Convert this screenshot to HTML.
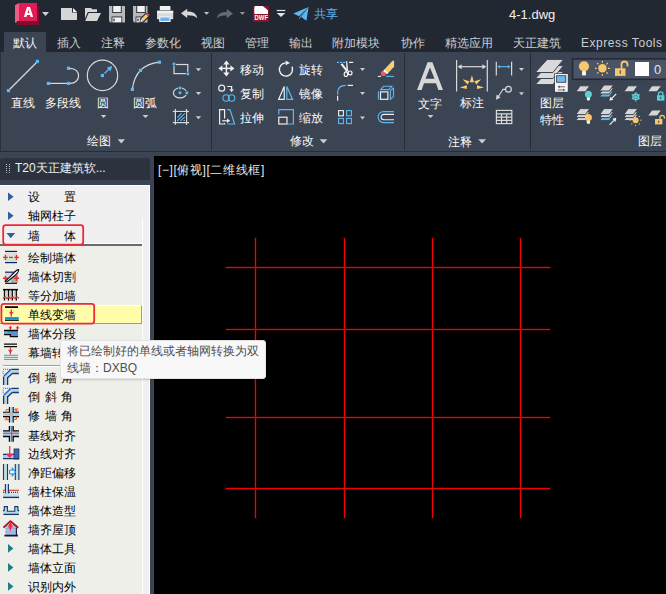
<!DOCTYPE html>
<html><head><meta charset="utf-8">
<style>
*{margin:0;padding:0;box-sizing:border-box}
html,body{width:666px;height:594px;overflow:hidden;background:#222831;font-family:"Liberation Sans",sans-serif;}
.a{position:absolute}
.t{position:absolute;white-space:nowrap;font-size:12px;line-height:12px;color:#fafafa;font-weight:500}
svg{position:absolute;overflow:visible}
#title{left:0;top:0;width:666px;height:32px;background:#222831}
#tabs{left:0;top:32px;width:666px;height:20px;background:#222831}
#rib{left:0;top:52px;width:666px;height:99px;background:#3b4453;border-left:1px solid #2a303a}
.sep{position:absolute;top:53px;width:1px;height:97px;background:#262c36}
.tab{color:#c9cdd3}
.arr{position:absolute;width:0;height:0;border-left:3.5px solid transparent;border-right:3.5px solid transparent;border-top:4px solid #d0d3d8}
#band{left:0;top:151px;width:666px;height:5px;background:#3b4453;border-top:1px solid #272d37}
#dwg{left:154px;top:156px;width:512px;height:438px;background:#000}
#pal{left:0;top:156px;width:154px;height:438px;background:#3b4453}
#paltitle{left:0;top:158px;width:150px;height:22px;background:#2c323e;border-radius:3px 3px 0 0}
#list{left:0;top:185px;width:150px;height:409px;background:#f0f0f0;border-top:1px solid #fff;border-right:1px solid #fff}
.li{position:absolute;left:28px;font-size:12px;line-height:12px;color:#000;white-space:nowrap;font-weight:500}
.gl{position:absolute;background:#f40000;box-shadow:0 0 0 1px rgba(120,0,0,0.35)}
</style></head><body>
<div class="a" id="title"></div>
<div class="a" id="tabs"></div>
<div class="a" style="left:4px;top:32px;width:42px;height:20px;background:#3b4453"></div>
<div class="a" id="rib"></div>
<div class="sep" style="left:211px"></div>
<div class="sep" style="left:404px"></div>
<div class="sep" style="left:530px"></div>
<div class="a" id="band"></div>
<div class="a" id="pal"></div>
<div class="a" id="dwg"></div>
<div class="a" id="paltitle"></div>
<div class="a" id="list"></div>
<div class="a" style="left:142px;top:219px;width:1px;height:375px;background:#fff"></div>
<div class="a" style="left:0;top:246px;width:142px;height:348px;background:#efefea"></div>
<div class="a" style="left:0;top:305px;width:142px;height:19px;background:#fffdaa;border-top:1px solid #fff;border-right:1px solid #9a9a9a;border-bottom:1px solid #9a9a9a"></div>
<div class="a" style="left:0;top:243px;width:142px;height:1px;background:#fafafa"></div><div class="a" style="left:0;top:244px;width:142px;height:2px;background:#6b6b6b"></div>
<div class="a" style="left:3px;top:365px;width:139px;height:1px;background:#a0a0a0"></div><div class="a" style="left:3px;top:366px;width:139px;height:1px;background:#fff"></div>


<svg width="666" height="594" style="left:0;top:0" viewBox="0 0 666 594">
<!-- ===== title bar ===== -->
<polygon points="15,5.3 19,3 19,21 15,23" fill="#ee5c86"/>
<polygon points="17,21 37,21 37,7 39,7 39,25 17,25" fill="#850a2c"/>
<rect x="19" y="3" width="18" height="18" fill="#e31b54"/>
<path d="M23.8,17 L27,7.1 H30 L33.2,17 H30.6 L30,15 H27 L26.4,17 Z M27.6,12.9 H29.4 L28.5,9.6 Z" fill="#fff" fill-rule="evenodd"/>
<polygon points="42,12 49,12 45.5,16" fill="#cfd2d6"/>
<!-- new -->
<path d="M61,8 H72 V12.6 H77 V20 H61 Z" fill="#d6d6d6"/>
<polygon points="73,8 77,12 73,12" fill="#f4f4f4"/>
<!-- open -->
<path d="M85,8 H91 L92.3,9.3 H97 V12 H87.8 L85,18.5 Z" fill="#d6d6d6"/>
<polygon points="88.6,13 101,13 97,21 85.2,21" fill="#d6d6d6"/>
<!-- save -->
<path d="M109,6 H125 V22.4 H110.5 L109,20.9 Z" fill="#b9b9b9"/>
<rect x="112.3" y="5" width="9.4" height="8" fill="#222831"/>
<rect x="113.2" y="6" width="7.6" height="6.1" fill="#f2f2f2"/>
<rect x="111.6" y="16.5" width="10.6" height="6.5" fill="#222831"/>
<rect x="112.4" y="17.4" width="9" height="5" fill="#f2f2f2"/>
<rect x="113.4" y="18.6" width="1.2" height="2.6" fill="#222831"/>
<!-- save as -->
<path d="M133,6 H147.5 V22.4 H134.5 L133,20.9 Z" fill="#b9b9b9"/>
<rect x="136.3" y="5" width="9.4" height="8" fill="#222831"/>
<rect x="137.2" y="6" width="7.6" height="6.1" fill="#f2f2f2"/>
<rect x="135.6" y="16.5" width="8" height="6.5" fill="#222831"/>
<rect x="136.4" y="17.4" width="6.5" height="5" fill="#f2f2f2"/>
<rect x="137.4" y="18.6" width="1.2" height="2.6" fill="#222831"/>
<polygon points="140,18.5 146,12.5 149.8,16.2 143.8,22.2 139.5,23.5" fill="#222831"/>
<polygon points="141,19 146,14 148.3,16.3 143.3,21.3" fill="#f5c86a"/>
<polygon points="146,14 147.3,12.7 149.6,15 148.3,16.3" fill="#e8475a"/>
<polygon points="141,19 143.3,21.3 140.2,22.2" fill="#eee"/>
<!-- print -->
<rect x="159.8" y="6" width="10.6" height="4.3" fill="#f2f2f2"/>
<rect x="157" y="10.8" width="16.2" height="8.4" fill="#d9d9d9"/>
<rect x="157" y="10.8" width="16.2" height="2.5" fill="#f0f0f0"/>
<rect x="159.2" y="16.4" width="11.4" height="5.6" fill="#f2f2f2"/>
<rect x="160.3" y="17.5" width="9.2" height="3.5" fill="#6bb4ef"/>
<!-- undo -->
<path d="M181,13.3 L187.2,8.8 V11.6 C192,11.6 196.5,13 197.2,18.2 C195,15.8 191.5,15.2 187.2,15.2 V18 Z" fill="#d6d6d6"/>
<polygon points="204,12 209.2,12 206.6,14.8" fill="#c0c4ca"/>
<!-- redo -->
<path d="M233,13.5 L226.8,9.1 V11.9 C222,11.9 217.5,13.3 216.8,18.2 C219,16 222.5,15.5 226.8,15.5 V18.2 Z" fill="#666b73"/>
<polygon points="239.8,12 245,12 242.4,15" fill="#8d9198"/>
<!-- dwf -->
<rect x="253" y="6.1" width="15.8" height="15.8" fill="#8b1429"/>
<path d="M254.8,6.1 H263 L268,10.2 V14 H254.8 Z" fill="#fff"/>
<polygon points="263,6.1 268.8,6.1 268.8,10.6" fill="#8b1429"/>
<rect x="254" y="7" width="0.9" height="7" fill="#f6b7c4"/>
<text x="254.6" y="19.7" font-family="Liberation Sans" font-weight="bold" font-size="6.4" fill="#fff" textLength="13.4" lengthAdjust="spacingAndGlyphs">DWF</text>
<!-- customize -->
<rect x="276.7" y="9.9" width="8.6" height="1.2" fill="#e4e4e4"/>
<polygon points="276.7,13 285.3,13 281,17.1" fill="#e4e4e4"/>
<!-- share plane -->
<polygon points="293.3,13.4 308.6,6.9 299,16.2" fill="#5db6ef"/>
<polygon points="308.6,6.9 306.4,20.8 301.2,17" fill="#5db6ef"/>
<polygon points="308.6,6.9 299.8,16.8 298.6,19.8" fill="#5db6ef"/>
</svg>


<svg width="666" height="594" style="left:0;top:0" viewBox="0 0 666 594">
<g fill="none" stroke="#d9d9d9" stroke-width="1.2">
<line x1="9.5" y1="89.5" x2="36.5" y2="62.5"/>
<line x1="50" y1="83.4" x2="67" y2="83.4"/>
<path d="M70,68.3 C81.5,68.3 81.5,83.4 70,83.4"/>
<circle cx="102.5" cy="75.4" r="15.2"/>
<path d="M132.4,89.4 Q135.1,65 159.4,62.2"/>
<rect x="174" y="64.5" width="13.8" height="9.1"/>
<ellipse cx="180" cy="92.9" rx="6.6" ry="5"/>
<line x1="175.4" y1="109" x2="175.4" y2="124.8"/>
<line x1="186.5" y1="109" x2="186.5" y2="124.8"/>
<line x1="172.8" y1="111.5" x2="189" y2="111.5"/>
<line x1="172.8" y1="122.6" x2="189" y2="122.6"/>
</g>
<g fill="none" stroke="#5cb8f5" stroke-width="1.2">
<line x1="104.5" y1="73.5" x2="109.5" y2="68.5"/>
<rect x="176" y="112.1" width="9.9" height="9.9" fill="#2b3140" stroke="none"/><path d="M177.2,121 L184.8,113.4 M177.2,117.6 L181.6,113.2 M180.4,121.2 L184.8,116.8 M183.6,121.2 L184.8,120" stroke-width="1.1" stroke="#66c0f6"/>
</g>
<polygon points="112.2,66 106.8,67.6 110.6,71.4" fill="#5cb8f5"/>

<rect x="6.90" y="89.00" width="3.2" height="3.2" fill="#5cb8f5"/><rect x="35.80" y="59.80" width="3.2" height="3.2" fill="#5cb8f5"/>
<rect x="46.80" y="81.80" width="3.2" height="3.2" fill="#5cb8f5"/><rect x="66.90" y="81.80" width="3.2" height="3.2" fill="#5cb8f5"/><rect x="66.90" y="66.70" width="3.2" height="3.2" fill="#5cb8f5"/>
<rect x="100.80" y="73.90" width="3.2" height="3.2" fill="#5cb8f5"/>
<rect x="130.80" y="87.80" width="3.2" height="3.2" fill="#5cb8f5"/><rect x="138.90" y="68.80" width="3.2" height="3.2" fill="#5cb8f5"/><rect x="157.80" y="60.60" width="3.2" height="3.2" fill="#5cb8f5"/>
<rect x="172.00" y="62.00" width="4" height="4" fill="#3b4453"/><rect x="172.65" y="62.65" width="2.7" height="2.7" fill="#5cb8f5"/><rect x="185.90" y="71.90" width="4" height="4" fill="#3b4453"/><rect x="186.55" y="72.55" width="2.7" height="2.7" fill="#5cb8f5"/>
<rect x="178.00" y="86.00" width="4" height="4" fill="#3b4453"/><rect x="178.65" y="86.65" width="2.7" height="2.7" fill="#5cb8f5"/><rect x="178.00" y="90.80" width="4" height="4" fill="#3b4453"/><rect x="178.65" y="91.45" width="2.7" height="2.7" fill="#5cb8f5"/><rect x="184.90" y="90.80" width="4" height="4" fill="#3b4453"/><rect x="185.55" y="91.45" width="2.7" height="2.7" fill="#5cb8f5"/>
<polygon points="195.7,68.2 201.2,68.2 198.45,71.2" fill="#c9ccd1"/><polygon points="195.7,92 201.2,92 198.45,95" fill="#c9ccd1"/><polygon points="195.7,116.2 201.2,116.2 198.45,119.2" fill="#c9ccd1"/>
<polygon points="100.8,115 106.4,115 103.6,118" fill="#c9ccd1"/>
<polygon points="142.5,115 148.5,115 145.5,118" fill="#c9ccd1"/>
<polygon points="117.6,139.3 125,139.3 121.3,143.4" fill="#c9ccd1"/>

<!-- modify -->
<g fill="none" stroke="#f0f0f0" stroke-width="1.5">
<line x1="221" y1="68.4" x2="232" y2="68.4" stroke-width="1.5"/>
<line x1="226.4" y1="63" x2="226.4" y2="74" stroke-width="1.5"/>
<path d="M291.9,66.6 A6.6,6.6 0 1 1 285.6,62.9" stroke-width="1.4"/>
</g>
<polygon points="218.4,68.4 222.4,65.2 222.4,71.6" fill="#f0f0f0"/>
<polygon points="234.4,68.4 230.4,65.2 230.4,71.6" fill="#f0f0f0"/>
<polygon points="226.4,60.4 223.2,64.4 229.6,64.4" fill="#f0f0f0"/>
<polygon points="226.4,76.4 223.2,72.4 229.6,72.4" fill="#f0f0f0"/>
<polygon points="290,62.9 285.6,60.5 285.6,65.3" fill="#f0f0f0"/>
<g fill="none" stroke="#eeeeee" stroke-width="1.2">
<circle cx="221.7" cy="88.2" r="3"/>
<path d="M227.2,86.5 H231.6 V89.5"/>
<polygon points="278.6,99.4 284.2,86.6 284.2,99.4"/>
<path d="M224.6,118.6 V109.6 H219.6 V124 H224.6 V123"/>
<line x1="222.2" y1="120.8" x2="227.5" y2="120.8"/>
<rect x="278.8" y="117.2" width="8.2" height="6.8"/>
</g>
<polygon points="231.6,92.2 229.4,89.2 233.8,89.2" fill="#eee"/>
<polygon points="230.2,120.8 227,118.6 227,123" fill="#eee"/>
<g fill="none" stroke="#5cb8f5" stroke-width="1.2">
<circle cx="226.1" cy="98" r="3.2" stroke-width="1.05"/>
<circle cx="231.6" cy="98" r="3.2" stroke-width="1.05"/>
<polygon points="286.8,86.6 286.8,99.4 292.6,99.4"/>
<path d="M227.2,109.6 H230 L234.6,124 H227.4"/>
<path d="M278.8,114.5 V109.6 H293.4 V124 H287.6"/>
</g>
<!-- trim -->
<rect x="336.9" y="61.8" width="2.2" height="1.2" fill="#5cb8f5"/><rect x="340" y="61.8" width="2.2" height="1.2" fill="#5cb8f5"/><rect x="343.1" y="61.8" width="2.2" height="1.2" fill="#5cb8f5"/>
<rect x="349" y="61.8" width="4.2" height="1.2" fill="#eeeeee"/>
<polygon points="340.6,64.4 342.4,63.2 347.6,70.2 346.2,71.4" fill="#f4f4f4"/>
<polygon points="346.1,61.1 347.2,61.3 348.1,70.5 346.5,71" fill="#f4f4f4"/>
<ellipse cx="345.9" cy="74.2" rx="1.7" ry="2.3" fill="none" stroke="#f4f4f4" stroke-width="1.2"/>
<ellipse cx="350.1" cy="72.9" rx="1.9" ry="1.9" fill="none" stroke="#f4f4f4" stroke-width="1.2"/>
<path d="M346.6,70.8 L346.4,72 M347.4,70.5 L348.6,71.6" stroke="#f4f4f4" stroke-width="1.1"/>
<polygon points="360,68.1 365,68.1 362.5,71.1" fill="#c9ccd1"/>
<!-- erase -->
<circle cx="383.4" cy="73.4" r="2.6" fill="#f05a5e"/>
<polygon points="384.6,69.2 388.6,72.6 387.1,74.2 383.1,70.8" fill="#fafafa"/>
<polygon points="392.5,60.8 394.1,60.8 394.1,66.8 388.6,72.6 384.6,69.2" fill="#f8cf72"/>
<line x1="377.8" y1="76.4" x2="381" y2="76.4" stroke="#eee" stroke-width="1.1"/>
<line x1="386" y1="76.4" x2="394" y2="76.4" stroke="#5cb8f5" stroke-width="1.1"/>
<!-- fillet -->
<path d="M337.6,94.5 V93 Q337.6,85.4 345.8,85.4" fill="none" stroke="#5cb8f5" stroke-width="1.2"/>
<line x1="337.6" y1="95.8" x2="337.6" y2="100.8" stroke="#eee" stroke-width="1.2"/>
<line x1="347.6" y1="85.4" x2="353" y2="85.4" stroke="#eee" stroke-width="1.2"/>
<polygon points="360,92.1 365,92.1 362.5,95.1" fill="#c9ccd1"/>
<!-- explode box -->
<rect x="380.5" y="91.9" width="7.4" height="7.4" fill="none" stroke="#eeeeee" stroke-width="1.2"/>
<g fill="none" stroke="#5cb8f5" stroke-width="1.1">
<line x1="378.4" y1="91.3" x2="378.4" y2="99.8"/>
<polygon points="380.6,89.6 383.6,86.3 391.8,86.3 388.8,89.6"/>
<polygon points="390.4,90.6 393.5,88.2 393.5,96.6 390.4,99.2"/>
</g>
<!-- array -->
<rect x="338.6" y="110.6" width="4.8" height="5.2" fill="none" stroke="#eee" stroke-width="1.1"/>
<g fill="none" stroke="#5cb8f5" stroke-width="1.1">
<rect x="346.6" y="110.6" width="4.8" height="5.2"/>
<rect x="338.6" y="118.4" width="4.8" height="5.2"/>
<rect x="346.6" y="118.4" width="4.8" height="5.2"/>
<path d="M394,111.6 H383.6 A5.5,5.5 0 0 0 383.6,122.6 H394"/>
</g>
<path d="M394,114.4 H383.8 A2.7,2.7 0 0 0 383.8,119.8 H394" fill="none" stroke="#eee" stroke-width="1.1"/>
<polygon points="360,116.5 365,116.5 362.5,119.5" fill="#c9ccd1"/>
<polygon points="319.6,139.3 327.4,139.3 323.5,143.4" fill="#c9ccd1"/>

<!-- annotate -->
<path d="M417,89.9 L427.6,62.3 H432.4 L443,89.9 H438.4 L436,83.2 H424 L421.6,89.9 Z M425.5,78.7 H434.5 L430,67.6 Z" fill="#d7d7d7" fill-rule="evenodd"/>
<polygon points="427.5,115 433.5,115 430.5,118" fill="#c9ccd1"/>
<g stroke="#d9d9d9" stroke-width="1.2" fill="none">
<line x1="456.6" y1="60.1" x2="456.6" y2="91.5"/>
<line x1="487.3" y1="60.1" x2="487.3" y2="91.5"/>
<line x1="460" y1="66.7" x2="484" y2="66.7"/>
<line x1="496.3" y1="61.8" x2="496.3" y2="75.6"/>
<line x1="511.6" y1="61.8" x2="511.6" y2="75.6"/>
<circle cx="508.4" cy="89.3" r="2.9"/>
<path d="M505.5,89.3 H503 L498.2,96.8"/>
<rect x="496.4" y="110.4" width="15.4" height="13.2"/>
<path d="M496.4,113.8 H511.8 M496.4,117.1 H511.8 M496.4,120.4 H511.8 M501.5,113.8 V123.6 M506.7,113.8 V123.6"/>
</g>
<polygon points="457.6,66.7 461.6,64.2 461.6,69.2" fill="#d9d9d9"/>
<polygon points="486.3,66.7 482.3,64.2 482.3,69.2" fill="#d9d9d9"/>
<polygon points="496,99.8 496.6,94.6 500.6,97.4" fill="#d9d9d9"/>
<line x1="499" y1="66.7" x2="509" y2="66.7" stroke="#5cb8f5" stroke-width="1.1"/>
<polygon points="497.4,66.7 500,65 500,68.4" fill="#5cb8f5"/>
<polygon points="510.5,66.7 507.9,65 507.9,68.4" fill="#5cb8f5"/>
<g fill="#f8cd6e">
<polygon points="471.9,75.2 474,82.3 469.8,82.3"/>
<polygon points="462.7,79.2 469.5,81.3 467.5,84.5"/>
<polygon points="481.1,79.2 474.3,81.3 476.3,84.5"/>
<polygon points="459.8,87.5 466.8,85.3 466.8,89"/>
<polygon points="484,87.5 477,85.3 477,89"/>
</g>
<polygon points="519,68.1 524,68.1 521.5,71.1" fill="#c9ccd1"/><polygon points="519,92.2 524,92.2 521.5,95.2" fill="#c9ccd1"/>
<polygon points="478.2,139.3 486,139.3 482.1,143.4" fill="#c9ccd1"/>
</svg>


<svg width="666" height="594" style="left:0;top:0" viewBox="0 0 666 594">
<!-- layer props -->
<polygon points="547.2,71.6 563.6,71.6 552.9,84.6 535.3,84.6" fill="#d9d9d9" stroke="#3b4453" stroke-width="1"/>
<polygon points="547.2,65.6 563.6,65.6 552.9,78.5 535.3,78.5" fill="#d9d9d9" stroke="#3b4453" stroke-width="1"/>
<polygon points="547.2,59.4 563.6,59.4 552.9,72.5 535.3,72.5" fill="#d9d9d9" stroke="#3b4453" stroke-width="1"/>
<rect x="554.2" y="73.3" width="14.3" height="19.3" fill="#3b4453"/>
<rect x="555" y="74" width="12.8" height="17.8" fill="#f4f4f4"/>
<rect x="556.2" y="75.3" width="10" height="7.4" fill="#2a2f38"/>
<rect x="557" y="76.1" width="8.4" height="5.8" fill="#6bb8f2"/>
<path d="M559,86.8 H565 M557.8,89.9 H563.8" stroke="#4a4a4a" stroke-width="0.8"/>
<polygon points="557.6,86.8 559.6,85.4 559.6,88.2" fill="#4a4a4a"/>
<polygon points="565.2,89.9 563.2,88.5 563.2,91.3" fill="#4a4a4a"/>
<!-- combo -->
<rect x="572.6" y="58.9" width="100" height="20.4" fill="#4a5466" stroke="#262b33" stroke-width="1.6"/>
<circle cx="584" cy="66.3" r="5.1" fill="#f7c86b"/>
<rect x="582" y="71" width="4" height="4.6" rx="1" fill="#f4f4f4"/>
<circle cx="602.4" cy="68.3" r="4.2" fill="#f7c86b"/><line x1="608.00" y1="68.30" x2="609.90" y2="68.30" stroke="#f7c86b" stroke-width="1.2"/><line x1="606.36" y1="72.26" x2="607.70" y2="73.60" stroke="#f7c86b" stroke-width="1.2"/><line x1="602.40" y1="73.90" x2="602.40" y2="75.80" stroke="#f7c86b" stroke-width="1.2"/><line x1="598.44" y1="72.26" x2="597.10" y2="73.60" stroke="#f7c86b" stroke-width="1.2"/><line x1="596.80" y1="68.30" x2="594.90" y2="68.30" stroke="#f7c86b" stroke-width="1.2"/><line x1="598.44" y1="64.34" x2="597.10" y2="63.00" stroke="#f7c86b" stroke-width="1.2"/><line x1="602.40" y1="62.70" x2="602.40" y2="60.80" stroke="#f7c86b" stroke-width="1.2"/><line x1="606.36" y1="64.34" x2="607.70" y2="63.00" stroke="#f7c86b" stroke-width="1.2"/>
<path d="M621.5,68.5 V64.5 A3,3 0 0 1 627.5,64.5 V66.5" fill="none" stroke="#f7c86b" stroke-width="1.8"/>
<rect x="615" y="68.3" width="10.5" height="7.6" fill="#f7c86b"/>
<rect x="619.6" y="70.3" width="1.3" height="3.4" fill="#4a5466"/>
<rect x="635" y="62" width="14" height="14" fill="#fff"/>
<!-- row icons -->
<polygon points="580.2,85.8 589.8,85.8 585.4,91.8 575.8,91.8" fill="#d6d6d6" stroke="#3b4453" stroke-width="1"/><circle cx="588.4" cy="94.3" r="3.5" fill="#5dcdd6"/><rect x="586.8" y="97.2" width="3.2" height="3.2" rx="0.8" fill="#f4f4f4"/>
<polygon points="604.0,91.0 613.6,91.0 609.2,97.0 599.6,97.0" fill="#5cb8f5" stroke="#3b4453" stroke-width="1"/><polygon points="604.0,88.0 613.6,88.0 609.2,94.0 599.6,94.0" fill="#d6d6d6" stroke="#3b4453" stroke-width="1"/><polygon points="604.0,85.0 613.6,85.0 609.2,91.0 599.6,91.0" fill="#d6d6d6" stroke="#3b4453" stroke-width="1"/><line x1="616.2" y1="93.8" x2="611.91" y2="98.22" stroke="#eee" stroke-width="1.2"/><polygon points="609.4,100.8 610.33,96.68 613.49,99.75" fill="#eee"/>
<polygon points="628.2,85.8 637.8,85.8 633.4,91.8 623.8,91.8" fill="#d6d6d6" stroke="#3b4453" stroke-width="1"/><line x1="635.80" y1="92.20" x2="635.80" y2="101.40" stroke="#5dcdd6" stroke-width="1.2"/><line x1="639.78" y1="94.50" x2="631.82" y2="99.10" stroke="#5dcdd6" stroke-width="1.2"/><line x1="639.78" y1="99.10" x2="631.82" y2="94.50" stroke="#5dcdd6" stroke-width="1.2"/><circle cx="635.8" cy="96.8" r="2.9" fill="none" stroke="#5dcdd6" stroke-width="1.3"/>
<polygon points="651.9,85.8 661.5,85.8 657.1,91.8 647.5,91.8" fill="#d6d6d6" stroke="#3b4453" stroke-width="1"/><path d="M658.5,95.39999999999999 V94.0 A2.2,2.2 0 0 1 662.9,94.0 V95.39999999999999" fill="none" stroke="#5dcdd6" stroke-width="1.3"/><rect x="657" y="95.2" width="7.4" height="5.4" fill="#5dcdd6"/><rect x="660.2" y="96.8" width="1" height="2.2" fill="#3b4453"/>
<polygon points="580.2,114.6 589.8,114.6 585.4,120.6 575.8,120.6" fill="#d6d6d6" stroke="#3b4453" stroke-width="1"/><polygon points="580.2,111.6 589.8,111.6 585.4,117.6 575.8,117.6" fill="#d6d6d6" stroke="#3b4453" stroke-width="1"/><polygon points="580.2,108.6 589.8,108.6 585.4,114.6 575.8,114.6" fill="#d6d6d6" stroke="#3b4453" stroke-width="1"/><circle cx="588.4" cy="117.6" r="3.5" fill="#f7c86b"/><rect x="586.8" y="120.5" width="3.2" height="3.2" rx="0.8" fill="#f4f4f4"/>
<polygon points="604.0,114.6 613.6,114.6 609.2,120.6 599.6,120.6" fill="#5cb8f5" stroke="#3b4453" stroke-width="1"/><polygon points="604.0,111.6 613.6,111.6 609.2,117.6 599.6,117.6" fill="#d6d6d6" stroke="#3b4453" stroke-width="1"/><polygon points="604.0,108.6 613.6,108.6 609.2,114.6 599.6,114.6" fill="#d6d6d6" stroke="#3b4453" stroke-width="1"/><line x1="609.6" y1="124.8" x2="613.89" y2="120.38" stroke="#eee" stroke-width="1.2"/><polygon points="616.4,117.8 615.47,121.92 612.31,118.85" fill="#eee"/>
<polygon points="628.2,114.6 637.8,114.6 633.4,120.6 623.8,120.6" fill="#d6d6d6" stroke="#3b4453" stroke-width="1"/><polygon points="628.2,111.6 637.8,111.6 633.4,117.6 623.8,117.6" fill="#d6d6d6" stroke="#3b4453" stroke-width="1"/><polygon points="628.2,108.6 637.8,108.6 633.4,114.6 623.8,114.6" fill="#d6d6d6" stroke="#3b4453" stroke-width="1"/><circle cx="635.6" cy="120.2" r="3" fill="#f7c86b"/><circle cx="640.90" cy="120.20" r="0.65" fill="#f7c86b"/><circle cx="639.35" cy="123.95" r="0.65" fill="#f7c86b"/><circle cx="635.60" cy="125.50" r="0.65" fill="#f7c86b"/><circle cx="631.85" cy="123.95" r="0.65" fill="#f7c86b"/><circle cx="630.30" cy="120.20" r="0.65" fill="#f7c86b"/><circle cx="631.85" cy="116.45" r="0.65" fill="#f7c86b"/><circle cx="635.60" cy="114.90" r="0.65" fill="#f7c86b"/><circle cx="639.35" cy="116.45" r="0.65" fill="#f7c86b"/>
<polygon points="651.9,110.0 661.5,110.0 657.1,116.0 647.5,116.0" fill="#d6d6d6" stroke="#3b4453" stroke-width="1"/><path d="M660,119.19999999999999 V117.5 A2.2,2.2 0 0 1 664.4,117.5 V118.6" fill="none" stroke="#f7c86b" stroke-width="1.3"/><rect x="655" y="119.0" width="7.4" height="5.4" fill="#f7c86b"/><rect x="658.2" y="120.6" width="1" height="2.2" fill="#3b4453"/>
</svg>


<svg width="666" height="594" style="left:0;top:0" viewBox="0 0 666 594">
<rect x="6" y="164" width="1" height="1" fill="#c4c8ce"/><rect x="6" y="166" width="1" height="1" fill="#c4c8ce"/><rect x="6" y="168" width="1" height="1" fill="#c4c8ce"/><rect x="6" y="170" width="1" height="1" fill="#c4c8ce"/><rect x="6" y="172" width="1" height="1" fill="#c4c8ce"/><rect x="9" y="164" width="1" height="1" fill="#c4c8ce"/><rect x="9" y="166" width="1" height="1" fill="#c4c8ce"/><rect x="9" y="168" width="1" height="1" fill="#c4c8ce"/><rect x="9" y="170" width="1" height="1" fill="#c4c8ce"/><rect x="9" y="172" width="1" height="1" fill="#c4c8ce"/>
<!-- tree arrows -->
<polygon points="8,192.6 13.6,196.8 8,201" fill="#2f5f9e"/>
<polygon points="8,211.6 13.6,215.8 8,220" fill="#2f5f9e"/>
<polygon points="6.4,233 15.2,233 10.8,238.2" fill="#2f5f9e"/>
<polygon points="8,544 13.4,548.4 8,552.8" fill="#1b8080"/>
<polygon points="8,563 13.4,567.4 8,571.8" fill="#1b8080"/>
<polygon points="8,582 13.4,586.4 8,590.8" fill="#1b8080"/>
<!-- red box 1 -->

<!-- 绘制墙体 -->
<rect x="5" y="252" width="12" height="5" fill="#dedede"/>
<rect x="5" y="258" width="12" height="4.3" fill="#c6eac6"/>
<line x1="5" y1="251.4" x2="17" y2="251.4" stroke="#14206e" stroke-width="1.2"/>
<line x1="5" y1="262.6" x2="17" y2="262.6" stroke="#14206e" stroke-width="1.2"/>
<path d="M3,257.4 H7.8 M9,257.4 H13 M14.2,257.4 H19 M5.4,254.8 V260 M16.5,254.8 V260" stroke="#e8302e" stroke-width="1.4"/>
<!-- 墙体切割 -->
<rect x="5" y="273" width="12" height="10" fill="#d9d9d9"/>
<rect x="11" y="273" width="7" height="10" fill="#9a9a9a" opacity="0.7"/>
<rect x="5" y="280.5" width="6" height="2" fill="#c6eac6"/>
<line x1="5" y1="272.2" x2="17" y2="272.2" stroke="#14206e" stroke-width="1.2"/>
<line x1="5" y1="283.4" x2="17" y2="283.4" stroke="#14206e" stroke-width="1.2"/>
<path d="M3,278.3 H8 M14,278.3 H19 M5.4,275.8 V280.8 M16.5,275.8 V280.8" stroke="#e8302e" stroke-width="1.4"/>
<path d="M5.2,281.4 L13.5,273.5 Q16.5,269.5 18.6,269.6 Q18.8,272 15,275.5 L6.8,282 Z" fill="#fff" stroke="#0a0a0a" stroke-width="1.1"/>
<!-- 等分加墙 -->
<line x1="3" y1="289.7" x2="18" y2="289.7" stroke="#0a0a0a" stroke-width="1.6"/>
<path d="M4.5,290 V300.5 M8.5,290 V300.5 M12.3,290 V300.5 M16.3,290 V300.5" stroke="#0a0a0a" stroke-width="1.3"/>
<path d="M6.7,290.5 V297 M10.5,290.5 V297 M14.4,290.5 V297" stroke="#bbb" stroke-width="0.8"/>
<path d="M3,298.2 L5,297 L7,298.6 L9,297 L11,298.6 L13,297 L15,298.6 L17,297 L19,298.2" stroke="#e8302e" stroke-width="1.3" fill="none"/>
<!-- 单线变墙 -->
<rect x="5" y="306.2" width="13" height="1.8" fill="#0a0a0a"/>
<rect x="5" y="317.1" width="13.8" height="2.7" fill="#1a8ed0"/>
<rect x="5" y="319.9" width="13.8" height="1" fill="#0a0a0a"/>
<path d="M11.3,309.5 V316.5" stroke="#e8302e" stroke-width="1.3"/>
<polygon points="11.3,315 8.6,311.6 11.3,312.6 14,311.6" fill="#e8302e"/>
<!-- 墙体分段 -->
<path d="M4,330.6 H18 V336.6 H10.4 V334.5 H4 Z" fill="#5b92d2"/>
<rect x="4.5" y="331" width="3" height="2.2" fill="#4cc0f0"/>
<path d="M4,330.5 H18 M4,334.6 H10.4 V336.6 H18" stroke="#0a0a0a" stroke-width="1.3" fill="none"/>
<path d="M10.4,326 V330 M17.5,326 V330" stroke="#e8302e" stroke-width="1.2"/>
<polygon points="10.4,329.8 8.6,327.2 12.2,327.2" fill="#e8302e"/>
<polygon points="17.5,329.8 15.7,327.2 19.3,327.2" fill="#e8302e"/>
<!-- 幕墙转换 -->
<path d="M4,344.2 H17 M4,346.6 H17" stroke="#0a0a0a" stroke-width="1.3"/>
<path d="M10.4,347.5 V354.5" stroke="#e8302e" stroke-width="1.3"/>
<polygon points="10.4,353 7.8,349.4 10.4,350.6 13,349.4" fill="#e8302e"/>
<path d="M4,355.3 H18 M4,357.4 H18 M4,359.4 H18" stroke="#3aa3b8" stroke-width="1"/>
<!-- 倒墙角 / 倒斜角 -->
<g>
<polygon points="3.5,385 3.5,376 11,369 19,369 19,374 12.5,374 8,378.5 8,385" fill="#bcd5dd"/>
<path d="M3.6,376.5 V385 M7.6,377 V385 M11.3,369.3 H18.8 M12.5,373.5 H18.8" stroke="#17386e" stroke-width="1.3" fill="none"/>
<path d="M4,376 L10.8,369.4" stroke="#1a60d8" stroke-width="1.4"/>
<path d="M8,377.5 L12.5,373.3" stroke="#17386e" stroke-width="1.2"/>
<path d="M3.2,369.3 H10 M3.2,371.3 V375" stroke="#17386e" stroke-width="0.9" stroke-dasharray="0.9,1.1"/>
</g>
<g transform="translate(0,19)">
<polygon points="3.5,385 3.5,376 11,369 19,369 19,374 12.5,374 8,378.5 8,385" fill="#bcd5dd"/>
<path d="M3.6,376.5 V385 M7.6,377 V385 M11.3,369.3 H18.8 M12.5,373.5 H18.8" stroke="#17386e" stroke-width="1.3" fill="none"/>
<path d="M4,376 L10.8,369.4" stroke="#1a60d8" stroke-width="1.4"/>
<path d="M8,377.5 L12.5,373.3" stroke="#17386e" stroke-width="1.2"/>
<path d="M3.2,369.3 H10 M3.2,371.3 V375" stroke="#17386e" stroke-width="0.9" stroke-dasharray="0.9,1.1"/>
</g>
<!-- 修墙角 -->
<rect x="9.1" y="407" width="4.4" height="15.5" fill="#a8d0f0"/>
<rect x="3" y="412.1" width="16" height="4.7" fill="#a8d0f0"/>
<circle cx="11.3" cy="414.5" r="2" fill="#c8b898"/>
<path d="M9.4,407 V412.3 H3 M13.2,407 V412.3 H19 M3,416.6 H9.4 V422.5 M19,416.6 H13.2 V422.5" stroke="#0a0a0a" stroke-width="1.1" fill="none"/>
<path d="M6.2,413 V409.6 H9 M13.6,409.6 H16.4 V412 M16.4,416.5 V419.4 H13.6 M9,419.4 H6.2 V417" stroke="#ff4010" stroke-width="0.9" fill="none"/>
<rect x="15" y="408" width="3.2" height="3.2" fill="#ff6040" opacity="0.6"/>
<rect x="4.6" y="417.4" width="3.2" height="3.2" fill="#ff6040" opacity="0.6"/>
<!-- 基线对齐 -->
<rect x="9.4" y="425.9" width="3.8" height="15.8" fill="#a8d0f0"/>
<rect x="3" y="430.6" width="16" height="6.1" fill="#a8d0f0"/>
<path d="M9.4,425.9 V430.8 H3 M13.2,425.9 V430.8 H19 M3,436.5 H9.4 V441.7 M19,436.5 H13.2 V441.7" stroke="#0a0a0a" stroke-width="1.3" fill="none"/>
<path d="M11.6,425.9 V441.7 M3,433.3 H19" stroke="#ff3a10" stroke-width="1.1"/>
<!-- 边线对齐 -->
<rect x="3" y="454.1" width="11" height="4.5" fill="#a8c8e8"/>
<rect x="14.1" y="449" width="4.8" height="10" fill="#3a6aa8" stroke="#17386e" stroke-width="0.9"/>
<path d="M3,454.3 H14 M3,458.6 H19" stroke="#17386e" stroke-width="1.3"/>
<line x1="9.7" y1="446" x2="9.7" y2="454" stroke="#f0305a" stroke-width="1.3"/>
<polygon points="9.7,458 5.8,453.8 13.6,453.8" fill="#f0305a"/>
<!-- 净距偏移 -->
<rect x="3.4" y="464" width="4.1" height="16" fill="#c0dede"/>
<rect x="15.3" y="464" width="3.6" height="16" fill="#c0dede"/>
<path d="M3.5,464 V480 M7.5,464 V480 M15.3,464 V480 M18.9,464 V480" stroke="#17386e" stroke-width="1.1"/>
<path d="M9.6,470.3 H12.3 V468.3 L15.4,472 L12.3,475.7 V473.7 H9.6 Z" fill="#fff" stroke="#1a90e8" stroke-width="1.1"/>
<!-- 墙柱保温 -->
<rect x="3" y="493.5" width="16" height="3.6" fill="#c4dcee"/>
<rect x="5.4" y="484" width="3" height="9.5" fill="#c4dcee"/>
<path d="M5.4,484 V493.5 M8.4,484 V493.5" stroke="#17386e" stroke-width="1.1"/>
<line x1="3" y1="497.4" x2="19" y2="497.4" stroke="#17386e" stroke-width="1.4"/>
<path d="M3,490.2 H5 M8.9,490.2 H19" stroke="#d02020" stroke-width="1.1"/>
<path d="M3,492.3 H5 M9,492.3 H19" stroke="#111" stroke-width="1.1" stroke-dasharray="1.1,0.9"/>
<!-- 墙体造型 -->
<path d="M3.4,515 V510.5 H4.3 V506.6 H7.4 V511.3 H14.8 V506.6 H17.9 V510.5 H18.9 V515 Z" fill="#b8d8e0"/>
<path d="M4.3,510.5 V506.6 H7.4 V511.3 H14.8 V506.6 H17.9 V510.5" stroke="#17386e" stroke-width="1.1" fill="none"/>
<rect x="3" y="509.8" width="1.5" height="1.5" fill="#17386e"/><rect x="17.6" y="509.8" width="1.5" height="1.5" fill="#17386e"/>
<line x1="3.4" y1="514.4" x2="18.9" y2="514.4" stroke="#17386e" stroke-width="1.3"/>
<!-- 墙齐屋顶 -->
<rect x="5.4" y="525" width="11.2" height="10" fill="#9cc4f0"/>
<path d="M5.4,528.5 H16.6 M5.4,532 H16.6" stroke="#a898c8" stroke-width="0.8"/>
<line x1="16.4" y1="527.5" x2="16.4" y2="535" stroke="#1a1a40" stroke-width="1.1"/>
<polyline points="3.4,527.6 10.4,521.2 18.2,527.8" fill="none" stroke="#a81030" stroke-width="1.8"/>
<rect x="4.4" y="534.7" width="13.5" height="1.8" fill="#1a1030"/>
<path d="M10.4,524 V530.5 M8.2,526.8 H12.6" stroke="#ff1a1a" stroke-width="1.3"/>
<polygon points="10.4,522.4 8,525.6 12.8,525.6" fill="#ff1a1a"/>
</svg>

<!-- title text -->
<div class="t" style="left:509px;top:8px;font-size:13px;line-height:13px;color:#f0f0f0">4-1.dwg</div>
<div class="t" style="left:314px;top:8px;font-size:12px;color:#5fb3ef">共享</div>

<!-- tabs -->
<div class="t tab" style="left:13px;top:37px;color:#f4f4f4">默认</div>
<div class="t tab" style="left:57px;top:37px">插入</div>
<div class="t tab" style="left:101px;top:37px">注释</div>
<div class="t tab" style="left:145px;top:37px">参数化</div>
<div class="t tab" style="left:201px;top:37px">视图</div>
<div class="t tab" style="left:245px;top:37px">管理</div>
<div class="t tab" style="left:289px;top:37px">输出</div>
<div class="t tab" style="left:332px;top:37px">附加模块</div>
<div class="t tab" style="left:401px;top:37px">协作</div>
<div class="t tab" style="left:445px;top:37px">精选应用</div>
<div class="t tab" style="left:513px;top:37px">天正建筑</div>
<div class="t tab" style="left:581px;top:37px;letter-spacing:0.55px">Express Tools</div>

<!-- ribbon labels -->
<div class="t" style="left:11px;top:97px">直线</div>
<div class="t" style="left:45px;top:97px">多段线</div>
<div class="t" style="left:97px;top:97px">圆</div>
<div class="t" style="left:133px;top:97px">圆弧</div>
<div class="t" style="left:87px;top:135px">绘图</div>
<div class="t" style="left:240px;top:64px">移动</div>
<div class="t" style="left:299px;top:64px">旋转</div>
<div class="t" style="left:240px;top:88px">复制</div>
<div class="t" style="left:299px;top:88px">镜像</div>
<div class="t" style="left:240px;top:112px">拉伸</div>
<div class="t" style="left:299px;top:112px">缩放</div>
<div class="t" style="left:290px;top:135px">修改</div>
<div class="t" style="left:418px;top:98px">文字</div>
<div class="t" style="left:460px;top:97px">标注</div>
<div class="t" style="left:448px;top:136px">注释</div>
<div class="t" style="left:540px;top:97px">图层</div>
<div class="t" style="left:540px;top:114px">特性</div>
<div class="t" style="left:638px;top:135px">图层</div>
<div class="t" style="left:654px;top:63px;font-size:13px;line-height:13px;color:#dbe8f5">0</div>

<!-- palette -->
<div class="t" style="left:15px;top:162px;color:#eef0f2">T20天正建筑软...</div>

<div class="li" style="top:191px">设</div><div class="li" style="top:191px;left:64px">置</div>
<div class="li" style="top:210px">轴网柱子</div>
<div class="li" style="top:230px">墙</div><div class="li" style="top:230px;left:64px">体</div>
<div class="li" style="top:252px">绘制墙体</div>
<div class="li" style="top:271px">墙体切割</div>
<div class="li" style="top:290px">等分加墙</div>
<div class="li" style="top:309px">单线变墙</div>
<div class="li" style="top:328px">墙体分段</div>
<div class="li" style="top:347px">幕墙转换</div>
<div class="li" style="top:372px;word-spacing:1.4px">倒 墙 角</div>
<div class="li" style="top:391px;word-spacing:1.4px">倒 斜 角</div>
<div class="li" style="top:410px;word-spacing:1.4px">修 墙 角</div>
<div class="li" style="top:430px">基线对齐</div>
<div class="li" style="top:448px">边线对齐</div>
<div class="li" style="top:467px">净距偏移</div>
<div class="li" style="top:486px">墙柱保温</div>
<div class="li" style="top:505px">墙体造型</div>
<div class="li" style="top:524px">墙齐屋顶</div>
<div class="li" style="top:543px">墙体工具</div>
<div class="li" style="top:562px">墙体立面</div>
<div class="li" style="top:581px">识别内外</div>

<!-- drawing -->
<div class="t" style="left:158px;top:164px;color:#e8e8e8;letter-spacing:0.6px">[−][俯视][二维线框]</div>
<div class="gl" style="left:255px;top:238px;width:1px;height:280px"></div>
<div class="gl" style="left:344px;top:238px;width:1px;height:280px"></div>
<div class="gl" style="left:432px;top:238px;width:1px;height:280px"></div>
<div class="gl" style="left:520px;top:238px;width:1px;height:280px"></div>
<div class="gl" style="left:226px;top:267px;width:324px;height:1px"></div>
<div class="gl" style="left:226px;top:329px;width:324px;height:1px"></div>
<div class="gl" style="left:226px;top:417px;width:324px;height:1px"></div>
<div class="gl" style="left:226px;top:488px;width:324px;height:1px"></div>


<svg width="666" height="594" style="left:0;top:0" viewBox="0 0 666 594">
<rect x="3.2" y="225.2" width="80" height="19.4" rx="2.5" fill="none" stroke="#ee2a36" stroke-width="1.8"/>
<rect x="1.4" y="303.8" width="92.8" height="19.8" rx="2.5" fill="none" stroke="#ee2a36" stroke-width="1.8"/>
</svg>
<div class="a" style="left:60px;top:340px;width:206px;height:39px;background:#f8f8f8;border-radius:3px;border:1px solid #e2e2e2;box-shadow:1px 1px 2px rgba(0,0,0,0.18)"></div>
<div class="t" style="left:67px;top:345px;color:#4e4e4e">将已绘制好的单线或者轴网转换为双</div>
<div class="t" style="left:67px;top:362px;color:#4e4e4e">线墙：DXBQ</div>
</body></html>
